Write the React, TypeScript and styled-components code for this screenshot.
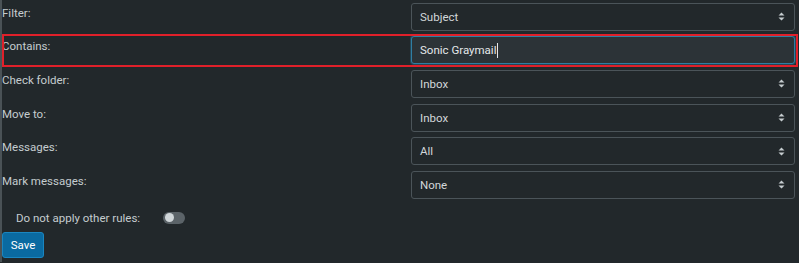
import React from "react";
import styled, { createGlobalStyle } from "styled-components";

const GlobalStyle = createGlobalStyle`
  html, body {
    margin: 0;
    padding: 0;
    background: #22282b;
  }
  body {
    font-family: Roboto, "Noto Sans", sans-serif;
    font-size: 11.5px;
    color: #c5cccf;
  }
`;

interface Rule {
  label: string;
  value: string;
  kind: "select" | "input";
}

const rules: Rule[] = [
  { label: "Filter:", value: "Subject", kind: "select" },
  { label: "Contains:", value: "Sonic Graymail", kind: "input" },
  { label: "Check folder:", value: "Inbox", kind: "select" },
  { label: "Move to:", value: "Inbox", kind: "select" },
  { label: "Messages:", value: "All", kind: "select" },
  { label: "Mark messages:", value: "None", kind: "select" },
];

const App: React.FC = () => {
  return (
    <>
      <GlobalStyle />
      <Page>
        {rules.map((r) => (
          <Row key={r.label} $highlight={r.kind === "input"}>
            <Label>{r.label}</Label>
            {r.kind === "select" ? (
              <Select>
                <span>{r.value}</span>
                <svg width="7" height="9" viewBox="0 0 7 9">
                  <path d="M3.5 0.5 L6.5 3.6 H0.5 Z M3.5 8.5 L6.5 5.4 H0.5 Z" fill="#c5cccf" />
                </svg>
              </Select>
            ) : (
              <TextInput>
                <span>{r.value}</span>
                <Caret />
              </TextInput>
            )}
          </Row>
        ))}
        <SwitchRow>
          <span>Do not apply other rules:</span>
          <Switch>
            <Knob />
          </Switch>
        </SwitchRow>
        <SaveButton>Save</SaveButton>
      </Page>
    </>
  );
};
export default App;

const Page = styled.div`
  height: 263px;
  box-sizing: border-box;
  border-top: 1px solid #3a4145;
  border-left: 2px solid #4a5256;
  margin-top: -1px;
`;

const Row = styled.div<{ $highlight?: boolean }>`
  display: grid;
  grid-template-columns: 409px 1fr;
  padding: 2.8px 3px 2.8px 0;
  outline: ${(p) => (p.$highlight ? "2px solid #e0202a" : "none")};
  outline-offset: -2px;
  margin-right: 1px;
`;

const Label = styled.div`
  padding-top: 2px;
  line-height: 16px;
  color: #c5cccf;
`;

const Select = styled.div`
  height: 28px;
  box-sizing: border-box;
  border: 1px solid #4b5459;
  border-radius: 3px;
  background: #22282b;
  display: flex;
  align-items: center;
  justify-content: space-between;
  padding: 0 9px 0 8px;
  color: #d2d7da;
`;

const TextInput = styled.div`
  height: 28px;
  box-sizing: border-box;
  border: 1px solid #2f7ea3;
  border-radius: 3px;
  background: #2c3337;
  box-shadow: 0 0 0 1px rgba(47, 126, 163, 0.35);
  display: flex;
  align-items: center;
  padding: 0 8px;
  color: #e4e8ea;
`;

const Caret = styled.span`
  display: inline-block;
  width: 1px;
  height: 15px;
  background: #e4e8ea;
  margin-left: 1px;
`;

const SwitchRow = styled.div`
  display: flex;
  align-items: center;
  gap: 23px;
  padding: 5px 0 0 14px;
  height: 22px;
`;

const Switch = styled.div`
  width: 22px;
  height: 12px;
  border-radius: 6px;
  background: #5b6368;
  display: flex;
  align-items: center;
  padding: 0 1.5px;
  box-sizing: border-box;
`;

const Knob = styled.div`
  width: 9px;
  height: 9px;
  border-radius: 50%;
  background: #d0d6d9;
`;

const SaveButton = styled.button`
  margin: 3px 0 0 0;
  height: 26px;
  width: 42px;
  padding: 0;
  border: 1px solid #1a86c0;
  border-radius: 3px;
  background: #0a6aa1;
  color: #ffffff;
  font-family: Roboto, "Noto Sans", sans-serif;
  font-size: 11.5px;
`;
